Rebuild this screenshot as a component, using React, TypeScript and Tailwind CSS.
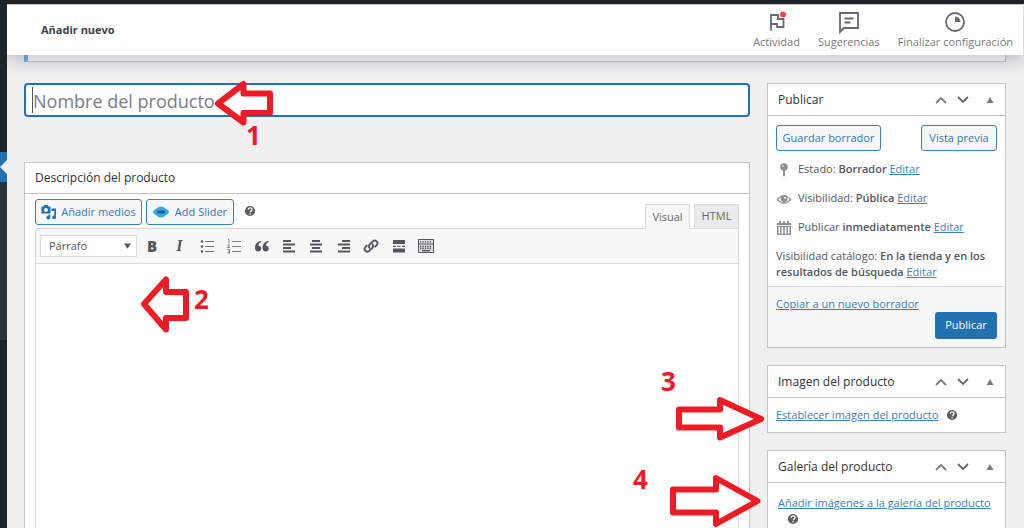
import { ReactNode } from "react";

type ChildrenProps = { children: ReactNode };

const outlineButton =
  "flex items-center justify-center h-[26px] rounded-[3px] border border-[#3582c4] bg-[#f6f7f7] text-[#3478b5] text-[11px] whitespace-nowrap";

const TextLink = ({ children }: ChildrenProps) => (
  <a href="#" className="text-[#3a80ba] underline">
    {children}
  </a>
);

const HelpIcon = () => (
  <svg viewBox="0 0 20 20" className="w-3 h-3 shrink-0">
    <circle cx="10" cy="10" r="8.500" fill="#5b5e63" />
    <path
      d="M7 8c0-4 6.500-4 6.500-.5 0 2.500-3 2.300-3 4.700M10.300 13.800v2"
      fill="none"
      stroke="#fff"
      strokeWidth="2.200"
    />
  </svg>
);

const PanelHeader = ({ title }: { title: string }) => (
  <div className="flex items-center h-8 pl-[10px] pr-[11px] pt-px border-b border-[#c3c4c7]">
    <h2 className="flex-1 text-[12px] text-[#2f3338]">{title}</h2>
    <button aria-label="Subir" className="w-[22px] flex justify-center">
      <svg viewBox="0 0 12 8" className="w-3 h-2">
        <path d="M1 7l5-5 5 5" fill="none" stroke="#787c82" strokeWidth="1.800" />
      </svg>
    </button>
    <button aria-label="Bajar" className="w-[22px] flex justify-center">
      <svg viewBox="0 0 12 8" className="w-3 h-2">
        <path d="M1 1l5 5 5-5" fill="none" stroke="#63676d" strokeWidth="1.800" />
      </svg>
    </button>
    <button aria-label="Alternar panel" className="ml-3 w-2 flex justify-center">
      <svg viewBox="0 0 8 6" className="w-2 h-[6px]">
        <path d="M4 0l3.500 6h-7z" fill="#787c82" />
      </svg>
    </button>
  </div>
);

const Panel = ({ title, children }: { title: string } & ChildrenProps) => (
  <section className="bg-white border border-[#c3c4c7]">
    <PanelHeader title={title} />
    {children}
  </section>
);

const StatusRow = ({ icon, children }: { icon: ReactNode } & ChildrenProps) => (
  <div className="flex items-center h-[29px] gap-[6px]">
    <svg viewBox="0 0 16 16" className="w-4 h-4 shrink-0" fill="#8c8f94">
      {icon}
    </svg>
    <p className="whitespace-nowrap">{children}</p>
  </div>
);

const HeaderAction = ({ label, children }: { label: string } & ChildrenProps) => (
  <button className="flex flex-col items-center text-[11px] leading-4 text-[#7a7a7e]">
    <svg
      viewBox="0 0 24 24"
      className="w-6 h-6"
      fill="none"
      stroke="#6a6770"
      strokeWidth="1.800">
      {children}
    </svg>
    {label}
  </button>
);

const Lines = ({ d }: { d: string }) => (
  <path d={d} fill="none" stroke="#50575e" strokeWidth="2" />
);

const toolbarItems = [
  {
    label: "Lista con viñetas",
    icon: (
      <>
        <path d="M6 3.500h9M6 8.500h9M6 13.500h9" stroke="#6b7076" strokeWidth="1.200" />
        <circle cx="3" cy="3.500" r="1.300" fill="#50575e" />
        <circle cx="3" cy="8.500" r="1.300" fill="#50575e" />
        <circle cx="3" cy="13.500" r="1.300" fill="#50575e" />
      </>
    ),
  },
  {
    label: "Lista numerada",
    icon: (
      <path
        d="M6 3.500h9M6 8.500h9M6 13.500h9M2 1.500h1v4M1.500 7h2l-2 2.500h2.500M1.500 11.500h2v3.500h-2M2 13.200h1.500"
        fill="none"
        stroke="#7d8186"
      />
    ),
  },
  {
    label: "Cita",
    icon: (
      <path
        d="M7 3C3 3.500 1 6.500 1 9.700 1 12 2.300 13.500 4.200 13.500c1.800 0 3.100-1.200 3.100-2.900S6 7.800 4.500 7.800C4.500 6 5.500 4.700 7.200 4.100zM14.500 3c-4 .5-6 3.500-6 6.700 0 2.300 1.300 3.800 3.200 3.800 1.800 0 3.100-1.200 3.100-2.900s-1.300-2.800-2.800-2.800c0-1.800 1-3.100 2.700-3.700z"
        fill="#50575e"
      />
    ),
  },
  {
    label: "Alinear a la izquierda",
    icon: <Lines d="M2 3h8M2 6.500h12M2 10h8M2 13.500h12" />,
  },
  {
    label: "Centrar",
    icon: <Lines d="M4 3h8M2 6.500h12M4 10h8M2 13.500h12" />,
  },
  {
    label: "Alinear a la derecha",
    icon: <Lines d="M6 3h8M2 6.500h12M6 10h8M2 13.500h12" />,
  },
  {
    label: "Insertar enlace",
    icon: (
      <g fill="none" stroke="#50575e" strokeWidth="1.900">
        <path d="M7 10.500a2.700 2.700 0 0 1-.5-3.800L10 3.200a2.700 2.700 0 0 1 3.800 3.800l-2.200 2.200" />
        <path d="M9 5.800a2.700 2.700 0 0 1 .5 3.800L6 13.100a2.700 2.700 0 0 1-3.800-3.800l2.200-2.200" />
      </g>
    ),
  },
  {
    label: "Insertar leer más",
    icon: (
      <>
        <path d="M2 2h12v4H2zM2 10.500h12v4H2z" fill="#50575e" />
        <path d="M2 8.300h12" stroke="#50575e" strokeWidth="1.300" strokeDasharray="3 1.500" />
      </>
    ),
  },
  {
    label: "Barra de herramientas",
    icon: (
      <>
        <path d="M.5 1.500h15v13H.5zM.5 6h15" fill="#dcdfe2" stroke="#50575e" />
        <path d="M2 3.800h12M2 8.500h12M2 10.500h12" stroke="#50575e" strokeWidth="1.300" strokeDasharray="1.400 1" />
        <path d="M4 12.700h8" stroke="#50575e" strokeWidth="1.300" />
      </>
    ),
  },
];

const Rail = () => (
  <nav aria-label="Menú" className="flex flex-col w-[7px] shrink-0 bg-[#1d2327]">
    <div className="h-[152px]" />
    <a href="#" aria-label="Productos" className="block h-[30px] bg-[#2271b1]">
      <svg viewBox="0 0 7 30" className="block w-[7px] h-[30px]">
        <path d="M7 8L0 15l7 7z" fill="#f0f0f1" />
      </svg>
    </a>
    <div className="h-[158px] bg-[#2c3338]" />
  </nav>
);

const TopBar = () => (
  <header className="relative z-10 flex items-center h-[51px] mr-px pl-[34px] pr-[10px] bg-white border-t border-[#c3c4c7] shadow-[0_6px_16px_rgba(60,60,80,0.28)]">
    <h1 className="flex-1 text-[11px] font-bold text-[#3c3f48]">
      Añadir nuevo
    </h1>
    <div className="flex gap-[18px]">
      <HeaderAction label="Actividad">
        <path d="M6 20.500V5h7v4h5.500v8H12v-3H6" />
        <circle cx="18" cy="4.500" r="3" fill="#f0454f" stroke="none" />
      </HeaderAction>
      <HeaderAction label="Sugerencias">
        <path d="M3 3h18v15H7l-4 4zM7.500 8.500h9M7.500 12.500h6" />
      </HeaderAction>
      <HeaderAction label="Finalizar configuración">
        <circle cx="12" cy="12" r="9" />
        <path d="M12 6.500a5.500 5.500 0 0 1 5.500 5.500H12z" fill="#6a6770" stroke="none" />
      </HeaderAction>
    </div>
  </header>
);

const Editor = () => (
  <section className="flex flex-col flex-1 mt-[45px] -mb-px bg-white border border-[#c3c4c7]">
    <div className="flex items-center h-[31px] pl-[10px] border-b border-[#c3c4c7]">
      <h2 className="text-[12px] text-[#2f3338]">Descripción del producto</h2>
    </div>
    <div className="flex flex-col flex-1 px-[10px] pt-[5px]">
      <div className="flex items-start">
        <button className={`${outlineButton} w-[107px] gap-1`}>
          <svg viewBox="0 0 16 16" className="w-4 h-4" fill="#2271b1">
            <path
              d="M.5 2.500h2L3.300 1h3.400l.8 1.500h2v7h-9zM5 3.900a2 2 0 1 0 0 4 2 2 0 0 0 0-4z"
              fillRule="evenodd"
            />
            <path d="M10.500 4.500H15v9a1.900 1.900 0 1 1-1.700-2V7h-2.800z" />
            <circle cx="7.300" cy="13.500" r="1.900" />
            <path d="M7.600 10.500h1.600v3H7.600z" />
          </svg>
          Añadir medios
        </button>
        <button className={`${outlineButton} ml-1 w-[88px] gap-[6px]`}>
          <svg viewBox="0 0 16 12" className="w-4 h-3">
            <ellipse cx="8" cy="6" rx="8" ry="4" fill="#35a9df" />
            <circle cx="8" cy="6" r="5.600" fill="#35a9df" />
            <rect x="4" y="4.500" width="8" height="3" rx="1.500" fill="#1f5f99" />
          </svg>
          Add Slider
        </button>
        <span className="flex ml-[10px] mt-[6px]">
          <HelpIcon />
        </span>
        <div className="flex flex-1 justify-end gap-1 mt-[5px] text-[11px] text-[#646970]">
          <button className="relative z-[1] -mb-px h-[25px] w-[45px] bg-[#f6f7f7] border border-b-0 border-[#dcdcde]">
            Visual
          </button>
          <button className="h-6 w-[45px] bg-[#ebebec] border border-b-0 border-[#dcdcde]">
            HTML
          </button>
        </div>
      </div>
      <div className="flex flex-col flex-1 border border-b-0 border-[#dcdcde]">
        <div className="flex items-center h-[35px] pl-1 bg-[#f6f7f7] border-b border-[#dcdcde]">
          <div className="relative">
            <select
              aria-label="Formato"
              className="block appearance-none w-[97px] h-[22px] pl-2 bg-white border border-[#dcdcde] text-[11px] text-[#50575e]">
              <option>Párrafo</option>
            </select>
            <svg viewBox="0 0 8 6" className="absolute right-[6px] top-2 w-[7px] h-[6px] pointer-events-none">
              <path d="M0 0h8L4 6z" fill="#50575e" />
            </svg>
          </div>
          <div className="flex items-center justify-between w-[294px] ml-[5px] text-[#50575e]">
            <button aria-label="Negrita" className="w-5 text-[15px] leading-5 font-extrabold">
              B
            </button>
            <button
              aria-label="Cursiva"
              className="w-5 text-[16px] leading-5 font-bold italic font-['Liberation_Serif',serif]">
              I
            </button>
            {toolbarItems.map((item) => (
              <button key={item.label} aria-label={item.label} className="flex justify-center w-5">
                <svg viewBox="0 0 16 16" className="w-4 h-4">
                  {item.icon}
                </svg>
              </button>
            ))}
          </div>
        </div>
        <textarea
          aria-label="Descripción del producto"
          className="block flex-1 w-full resize-none bg-white outline-none"
        />
      </div>
    </div>
  </section>
);

const Sidebar = () => (
  <aside className="flex flex-col w-[239px] shrink-0 gap-[17px] text-[11px] text-[#50575e]">
    <Panel title="Publicar">
      <div className="px-2 pt-[9px] pb-[6px]">
        <div className="flex justify-between mb-1">
          <button className={`${outlineButton} w-[105px]`}>Guardar borrador</button>
          <button className={`${outlineButton} w-[76px]`}>Vista previa</button>
        </div>
        <StatusRow
          icon={
            <>
              <circle cx="8" cy="5" r="3.800" />
              <path d="M7 8h2v5l-1 2-1-2z" />
              <circle cx="7" cy="4" r="1" fill="#d5d7da" />
            </>
          }>
          Estado: <b className="font-semibold">Borrador</b> <TextLink>Editar</TextLink>
        </StatusRow>
        <StatusRow
          icon={
            <>
              <path d="M.5 8.500Q8-.5 15.500 8.500 8 17 .5 8.500z" />
              <path d="M2.300 8.500Q4 6.500 5 6c-.8 2 0 5 3 5.200 3 0 4-3 3-5.200q1.500.8 2.700 2.500Q8 14.500 2.300 8.500z" fill="#fff" />
              <circle cx="9" cy="6.800" r="1" fill="#fff" />
            </>
          }>
          Visibilidad: <b className="font-semibold">Pública</b> <TextLink>Editar</TextLink>
        </StatusRow>
        <StatusRow
          icon={
            <>
              <path d="M1 3h14v12H1zM2.500 7v6.800h11V7z" fillRule="evenodd" />
              <path d="M3 1h2v3H3zM7 1h2v3H7zM11 1h2v3h-2zM4 7h1.500v6.800H4zM7.200 7h1.600v6.800H7.200zM10.500 7H12v6.800h-1.500z" />
              <path d="M1 5.500h14" stroke="#fff" strokeWidth=".8" />
            </>
          }>
          Publicar <b className="font-semibold">inmediatamente</b> <TextLink>Editar</TextLink>
        </StatusRow>
        <p className="mt-[6px] leading-4">
          Visibilidad catálogo:{" "}
          <b className="font-semibold">En la tienda y en los resultados de búsqueda</b>{" "}
          <TextLink>Editar</TextLink>
        </p>
      </div>
      <div className="flex flex-col px-2 pt-[9px] pb-2 bg-[#f6f7f7] border-t border-[#dcdcde]">
        <p className="leading-4">
          <TextLink>Copiar a un nuevo borrador</TextLink>
        </p>
        <button className="self-end w-[62px] h-[27px] rounded-[3px] bg-[#2271b1] text-white">
          Publicar
        </button>
      </div>
    </Panel>
    <Panel title="Imagen del producto">
      <p className="flex items-center gap-2 h-[34px] px-2 whitespace-nowrap">
        <TextLink>Establecer imagen del producto</TextLink>
        <HelpIcon />
      </p>
    </Panel>
    <Panel title="Galería del producto">
      <div className="px-[10px] pt-3 pb-6 whitespace-nowrap">
        <p>
          <TextLink>Añadir imágenes a la galería del producto</TextLink>
        </p>
        <div className="pl-[9px] pt-[1px]">
          <HelpIcon />
        </div>
      </div>
    </Panel>
  </aside>
);

// Numbered hints drawn on top of the screen
const Annotations = () => (
  <div className="absolute inset-0 z-20 pointer-events-none text-[#ed1c24] text-[26px] leading-8 font-bold">
    <svg
      className="absolute left-0 top-0 w-[1024px] h-[528px]"
      fill="#fff"
      stroke="#ed1c24"
      strokeWidth="6"
      strokeLinejoin="round">
      <path d="M218 103.500L243.500 84v9.500H270v19.500h-26.500v9.500z" />
      <path d="M144 304L166 279.500V292h20v26h-20v11.500z" />
      <path d="M679 409.500h41V400l41 19-41 18.500v-10h-41z" />
      <path d="M673 489.500h43V478l41.500 23-41.500 23v-11.500h-43z" />
    </svg>
    <span className="absolute left-[246px] top-[119px]">1</span>
    <span className="absolute left-[194px] top-[283px]">2</span>
    <span className="absolute left-[661px] top-[365px]">3</span>
    <span className="absolute left-[633px] top-[463px]">4</span>
  </div>
);

const App = () => {
  return (
    <div className="relative flex flex-col h-screen overflow-hidden bg-[#f0f0f1] font-['Open_Sans','Noto_Sans',sans-serif]">
      <div className="flex flex-1 min-h-0">
        <Rail />
        <div className="flex flex-col flex-1 min-w-0">
          <div className="h-1 shrink-0 bg-[#1d2327]" />
          <TopBar />
          <div className="flex flex-col flex-1 min-h-0 pl-[17px] pr-[18px]">
            <div className="h-[7px] shrink-0 bg-white border border-t-0 border-l-4 border-[#c3c4c7] border-l-[#72aee6]" />
            <main className="flex flex-1 min-h-0 gap-[17px] mt-[21px]">
              <div className="flex flex-col flex-1 min-w-0">
                <div className="relative">
                  <input
                    type="text"
                    aria-label="Nombre del producto"
                    placeholder="Nombre del producto"
                    className="block w-full h-[34px] pl-[7px] pt-px rounded-[4px] border-2 border-[#2271b1] bg-white text-[18px] outline-none placeholder:text-[#7b7d82]"
                  />
                  <span className="absolute left-2 top-1 w-px h-[26px] bg-[#50575e]" />
                </div>
                <Editor />
              </div>
              <Sidebar />
            </main>
          </div>
        </div>
      </div>
      <Annotations />
    </div>
  );
};

export default App;
